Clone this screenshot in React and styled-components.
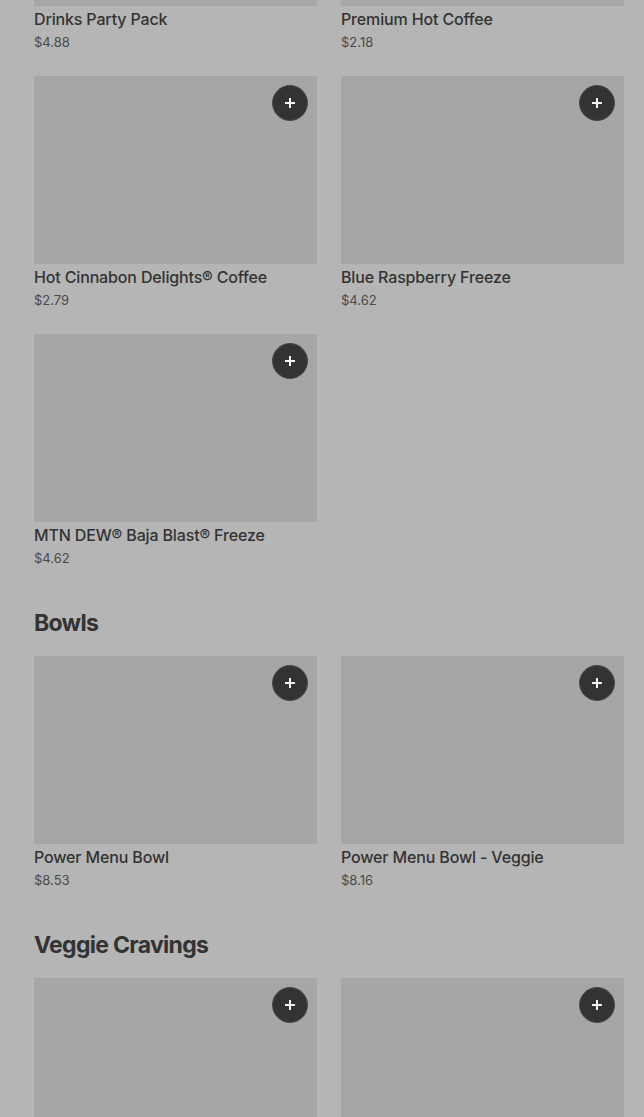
import React from 'react';
import styled, { createGlobalStyle } from 'styled-components';

const sections = [
  {
    title: null,
    items: [
      { name: 'Drinks Party Pack', price: '$4.88' },
      { name: 'Premium Hot Coffee', price: '$2.18' },
      { name: 'Hot Cinnabon Delights® Coffee', price: '$2.79' },
      { name: 'Blue Raspberry Freeze', price: '$4.62' },
      { name: 'MTN DEW® Baja Blast® Freeze', price: '$4.62' },
    ],
  },
  {
    title: 'Bowls',
    items: [
      { name: 'Power Menu Bowl', price: '$8.53' },
      { name: 'Power Menu Bowl - Veggie', price: '$8.16' },
    ],
  },
  {
    title: 'Veggie Cravings',
    items: [
      { name: 'Black Bean Crunchwrap Supreme®', price: '$5.49' },
      { name: 'Black Bean Chalupa Supreme', price: '$4.29' },
    ],
  },
];

const PlusIcon = () => (
  <svg width="12" height="12" viewBox="0 0 12 12">
    <path d="M6 1v10M1 6h10" stroke="#f2f2f2" strokeWidth="2" />
  </svg>
);

const App = () => {
  return (
    <>
      <GlobalStyle />
      <Page>
        {sections.map((section, i) => (
          <Section key={i}>
            {section.title && <SectionTitle>{section.title}</SectionTitle>}
            <Grid>
              {section.items.map((item) => (
                <Card key={item.name}>
                  <ImageBox>
                    <AddButton aria-label="Add">
                      <PlusIcon />
                    </AddButton>
                  </ImageBox>
                  <ItemName>{item.name}</ItemName>
                  <Price>{item.price}</Price>
                </Card>
              ))}
            </Grid>
          </Section>
        ))}
      </Page>
    </>
  );
};

const GlobalStyle = createGlobalStyle`
  html, body {
    margin: 0;
    padding: 0;
    background: #b5b5b5;
    overflow: hidden;
  }
  body {
    font-family: Inter, "Noto Sans", sans-serif;
    color: #333333;
  }
`;

const Page = styled.main`
  height: 1117px;
  overflow: hidden;
  padding: 0 20px 0 34px;
`;

const Section = styled.section`
  &:first-child {
    margin-top: -182px;
  }
  & + & {
    margin-top: 39px;
  }
`;

const SectionTitle = styled.h2`
  margin: 0 0 17px;
  font-size: 23px;
  line-height: 32px;
  font-weight: 700;
  letter-spacing: -0.7px;
  color: #333333;
`;

const Grid = styled.div`
  display: grid;
  grid-template-columns: 283px 283px;
  column-gap: 24px;
  row-gap: 24px;
`;

const Card = styled.div`
  display: flex;
  flex-direction: column;
`;

const ImageBox = styled.div`
  position: relative;
  height: 188px;
  background: #a6a6a6;
  margin-bottom: 3px;
`;

const AddButton = styled.button`
  position: absolute;
  top: 9px;
  right: 9px;
  width: 36px;
  height: 36px;
  border-radius: 50%;
  border: 1px solid #4a4a4a;
  background: #333333;
  display: flex;
  align-items: center;
  justify-content: center;
  padding: 0;
  cursor: pointer;
`;

const ItemName = styled.div`
  font-size: 16px;
  line-height: 20px;
  font-weight: 500;
  letter-spacing: -0.15px;
  color: #333333;
  white-space: nowrap;
`;

const Price = styled.div`
  margin-top: 4px;
  font-size: 13px;
  line-height: 19px;
  color: #4a4a4a;
`;

export default App;
